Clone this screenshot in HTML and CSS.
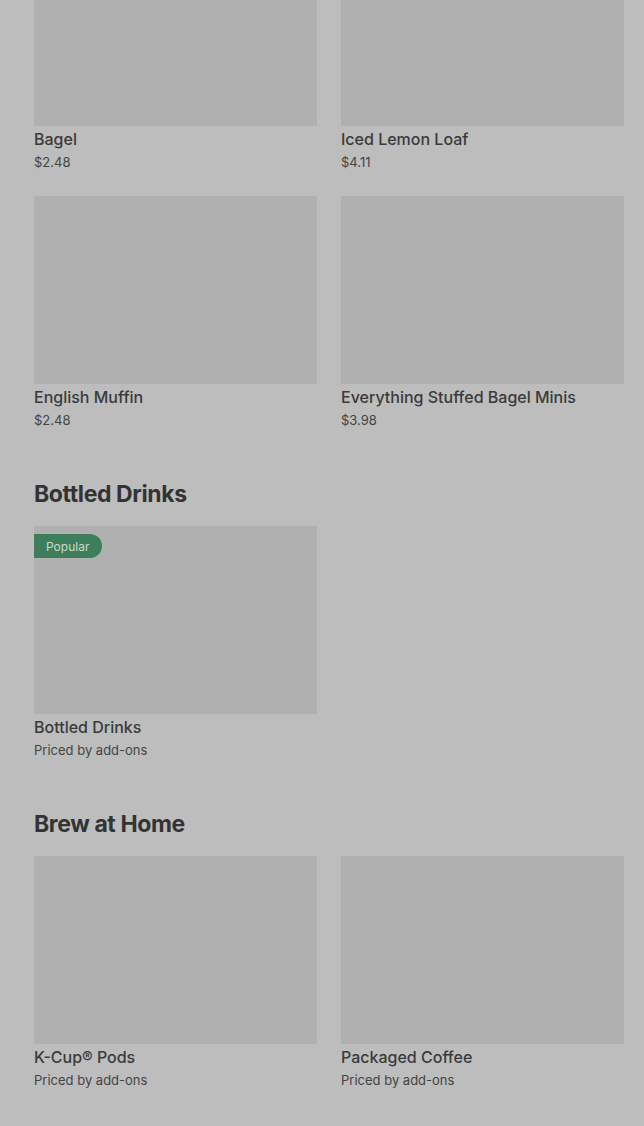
FILE: index.html
```html
<!DOCTYPE html>
<html lang="en">
<head>
<meta charset="utf-8">
<title>Menu</title>
<link rel="stylesheet" href="styles.css">
</head>
<body>
<main class="menu">
  <section class="section section-first">
    <div class="grid">
      <div class="item">
        <div class="thumb"></div>
        <div class="name">Bagel</div>
        <div class="price">$2.48</div>
      </div>
      <div class="item">
        <div class="thumb"></div>
        <div class="name">Iced Lemon Loaf</div>
        <div class="price">$4.11</div>
      </div>
      <div class="item">
        <div class="thumb"></div>
        <div class="name">English Muffin</div>
        <div class="price">$2.48</div>
      </div>
      <div class="item">
        <div class="thumb"></div>
        <div class="name">Everything Stuffed Bagel Minis</div>
        <div class="price">$3.98</div>
      </div>
    </div>
  </section>

  <section class="section">
    <h2 class="heading">Bottled Drinks</h2>
    <div class="grid">
      <div class="item">
        <div class="thumb"><span class="badge">Popular</span></div>
        <div class="name">Bottled Drinks</div>
        <div class="price">Priced by add-ons</div>
      </div>
    </div>
  </section>

  <section class="section">
    <h2 class="heading">Brew at Home</h2>
    <div class="grid">
      <div class="item">
        <div class="thumb"></div>
        <div class="name">K-Cup® Pods</div>
        <div class="price">Priced by add-ons</div>
      </div>
      <div class="item">
        <div class="thumb"></div>
        <div class="name">Packaged Coffee</div>
        <div class="price">Priced by add-ons</div>
      </div>
    </div>
  </section>
</main>
</body>
</html>
```

FILE: styles.css
```css
* { box-sizing: border-box; }
html, body {
  margin: 0;
  padding: 0;
  background: #bdbdbd;
}
body {
  font-family: Inter, "Noto Sans", "Liberation Sans", sans-serif;
  color: #3a3a3a;
  overflow: hidden;
  height: 1126px;
}
.menu {
  padding: 0 20px 0 34px;
  display: flex;
  flex-direction: column;
}
.section-first {
  margin-top: -62px;
}
.section + .section {
  margin-top: 50px;
}
.heading {
  margin: 0 0 18px;
  font-size: 23px;
  line-height: 28px;
  font-weight: 700;
  letter-spacing: -0.4px;
  color: #333;
}
.grid {
  display: grid;
  grid-template-columns: 283px 283px;
  column-gap: 24px;
  row-gap: 24px;
}
.item {
  display: flex;
  flex-direction: column;
}
.thumb {
  position: relative;
  height: 188px;
  background: #b0b0b0;
}
.name {
  margin-top: 3px;
  font-size: 16px;
  line-height: 20px;
  font-weight: 500;
  color: #3a3a3a;
}
.price {
  margin-top: 3px;
  font-size: 13px;
  line-height: 20px;
  font-weight: 400;
  color: #444;
}
.badge {
  position: absolute;
  top: 8px;
  left: 0;
  height: 24px;
  padding: 0 13px 0 12px;
  display: flex;
  align-items: center;
  font-size: 12px;
  color: #c6dccd;
  background: #3f7e5c;
  border-radius: 0 12px 12px 0;
}
```
